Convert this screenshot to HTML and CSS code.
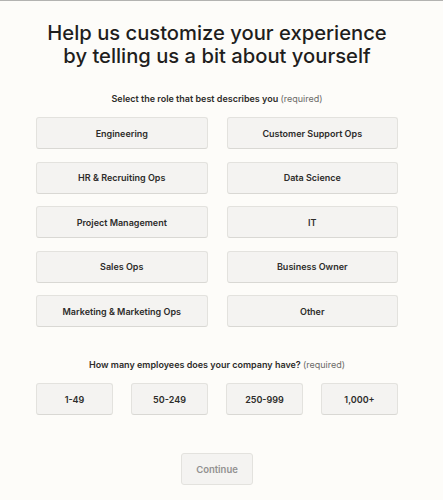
FILE: index.html
```html
<!DOCTYPE html>
<html lang="en">
<head>
    <meta charset="UTF-8">
    <meta name="viewport" content="width=device-width, initial-scale=1.0">
    <title>Tell us about yourself</title>
    <link rel="stylesheet" href="styles.css">
</head>
<body>
    <div class="container">
        <h1>Help us customize your experience<br>by telling us a bit about yourself</h1>

        <p class="question">Select the role that best describes you <span class="required">(required)</span></p>
        <div class="roles">
            <button class="option">Engineering</button>
            <button class="option">Customer Support Ops</button>
            <button class="option">HR &amp; Recruiting Ops</button>
            <button class="option">Data Science</button>
            <button class="option">Project Management</button>
            <button class="option">IT</button>
            <button class="option">Sales Ops</button>
            <button class="option">Business Owner</button>
            <button class="option">Marketing &amp; Marketing Ops</button>
            <button class="option">Other</button>
        </div>

        <p class="question second">How many employees does your company have? <span class="required">(required)</span></p>
        <div class="sizes">
            <button class="option">1-49</button>
            <button class="option">50-249</button>
            <button class="option">250-999</button>
            <button class="option">1,000+</button>
        </div>

        <div class="actions">
            <button class="continue" disabled>Continue</button>
        </div>
    </div>
</body>
</html>
```

FILE: styles.css
```css
:root {
    --page: #fdfcf9;
    --text: #1f1e1d;
    --text-2: #2d2c2a;
    --muted: #6b6a67;
    --option-bg: #f4f3f1;
    --option-border: #e3e2de;
}

html, body {
    margin: 0;
    padding: 0;
}
body {
    font-family: 'Inter', 'Liberation Sans', sans-serif;
    background-color: var(--page);
    color: var(--text);
    border-top: 1px solid #b3b3b1;
}
.container {
    width: 362px;
    margin-left: 36px;
    padding-top: 21px;
}
h1 {
    margin: 0 -20px;
    font-size: 20.2px;
    line-height: 22.5px;
    font-weight: 500;
    text-align: center;
}
.question {
    margin: 25px 0 11px;
    font-size: 9px;
    line-height: 14px;
    font-weight: 600;
    text-align: center;
    color: var(--text-2);
}
.question.second {
    margin-top: 31px;
}
.required {
    font-weight: 400;
    color: var(--muted);
}
.roles {
    display: grid;
    grid-template-columns: 1fr 1fr;
    column-gap: 19px;
    row-gap: 12.5px;
}
.sizes {
    display: grid;
    grid-template-columns: repeat(4, 1fr);
    column-gap: 18px;
}
.option {
    height: 32px;
    padding: 0;
    font-family: inherit;
    font-size: 9px;
    font-weight: 600;
    color: var(--text-2);
    background-color: var(--option-bg);
    border: 1px solid var(--option-border);
    border-bottom-color: #d9d8d4;
    border-radius: 3px;
    cursor: pointer;
}
.option:hover {
    background-color: #ecebe8;
}
.actions {
    display: flex;
    justify-content: center;
    margin-top: 38px;
}
.continue {
    width: 72px;
    height: 32px;
    padding: 0;
    font-family: inherit;
    font-size: 9.5px;
    font-weight: 600;
    color: #929190;
    background-color: var(--option-bg);
    border: 1px solid var(--option-border);
    border-radius: 3px;
}
```
